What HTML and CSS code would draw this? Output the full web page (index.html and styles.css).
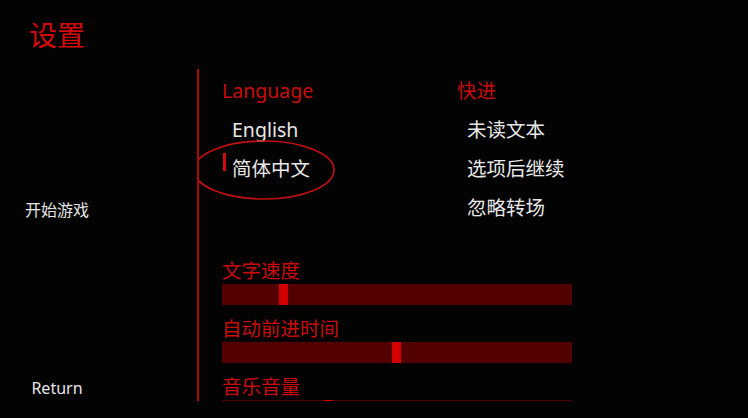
FILE: index.html
```html
<!DOCTYPE html>
<html lang="zh-CN">
<head>
<meta charset="utf-8">
<title>设置</title>
<link rel="stylesheet" href="styles.css">
</head>
<body>
<div class="screen">
  <header class="header">
    <h1 class="title">设置</h1>
  </header>
  <div class="main">
    <nav class="nav">
      <div class="nav-item nav-start">开始游戏</div>
      <div class="nav-item nav-return">Return</div>
    </nav>
    <section class="pane">
      <div class="options">
        <div class="group group-lang">
          <div class="group-title">Language</div>
          <div class="opt">English</div>
          <div class="opt opt-selected">
            简体中文
            <svg class="circle" width="144" height="62" viewBox="0 0 144 62"><ellipse cx="72" cy="31" rx="70" ry="29" fill="none" stroke="#c41010" stroke-width="1.6"/></svg>
          </div>
        </div>
        <div class="group group-skip">
          <div class="group-title">快进</div>
          <div class="opt">未读文本</div>
          <div class="opt">选项后继续</div>
          <div class="opt">忽略转场</div>
        </div>
      </div>
      <div class="sliders">
        <div class="slider">
          <div class="slider-label">文字速度</div>
          <div class="bar"><div class="thumb" style="margin-left:57px"></div></div>
        </div>
        <div class="slider">
          <div class="slider-label">自动前进时间</div>
          <div class="bar"><div class="thumb" style="margin-left:170px"></div></div>
        </div>
        <div class="slider">
          <div class="slider-label">音乐音量</div>
          <div class="bar"><div class="thumb" style="margin-left:102px"></div></div>
        </div>
      </div>
    </section>
  </div>
</div>
</body>
</html>
```

FILE: styles.css
```css
html, body {
  margin: 0;
  padding: 0;
  background: #000;
}
body {
  font-family: "Noto Sans", "Noto Sans CJK SC", sans-serif;
  color: #e6e6e6;
}
.screen {
  width: 748px;
  height: 418px;
  overflow: hidden;
  background: #030303;
}
.header {
  height: 69px;
  box-sizing: border-box;
  padding: 14px 0 0 29px;
}
.title {
  margin: 0;
  font-family: "Noto Sans CJK SC", sans-serif;
  font-weight: 400;
  font-size: 28px;
  line-height: 40px;
  color: #d40a0a;
}
.main {
  display: flex;
  height: 332px;
}
.nav {
  width: 114px;
  margin-right: 83px;
  display: flex;
  flex-direction: column;
  align-items: center;
  padding-top: 131px;
  padding-bottom: 3px;
  box-sizing: border-box;
}
.nav-item {
  font-size: 16px;
  line-height: 20px;
  color: #e6e6e6;
}
.nav-return {
  margin-top: auto;
}
.pane {
  flex: 1;
  border-left: 2px solid #a80808;
  overflow: hidden;
  padding: 2px 0 0 23px;
}
.options {
  display: flex;
}
.group-lang {
  width: 235px;
}
.group-title {
  font-size: 19.5px;
  line-height: 39px;
  height: 39px;
  color: #c80c0c;
}
.opt {
  position: relative;
  font-size: 19.5px;
  line-height: 39px;
  height: 39px;
  padding-left: 10px;
  color: #e8e8e8;
}
.opt-selected::before {
  content: "";
  position: absolute;
  left: 1px;
  top: 4px;
  width: 3px;
  height: 18px;
  background: #d40a0a;
}
.circle {
  position: absolute;
  left: -30px;
  top: -10px;
}
.sliders {
  margin-top: 32px;
  width: 350px;
}
.slider {
  margin-bottom: 12px;
}
.slider-label {
  font-size: 19.5px;
  line-height: 24px;
  height: 24px;
  margin-bottom: 1px;
  color: #c80c0c;
}
.bar {
  height: 21px;
  background: #520000;
  display: flex;
}
.thumb {
  width: 9px;
  height: 100%;
  background: #d40000;
}
```
